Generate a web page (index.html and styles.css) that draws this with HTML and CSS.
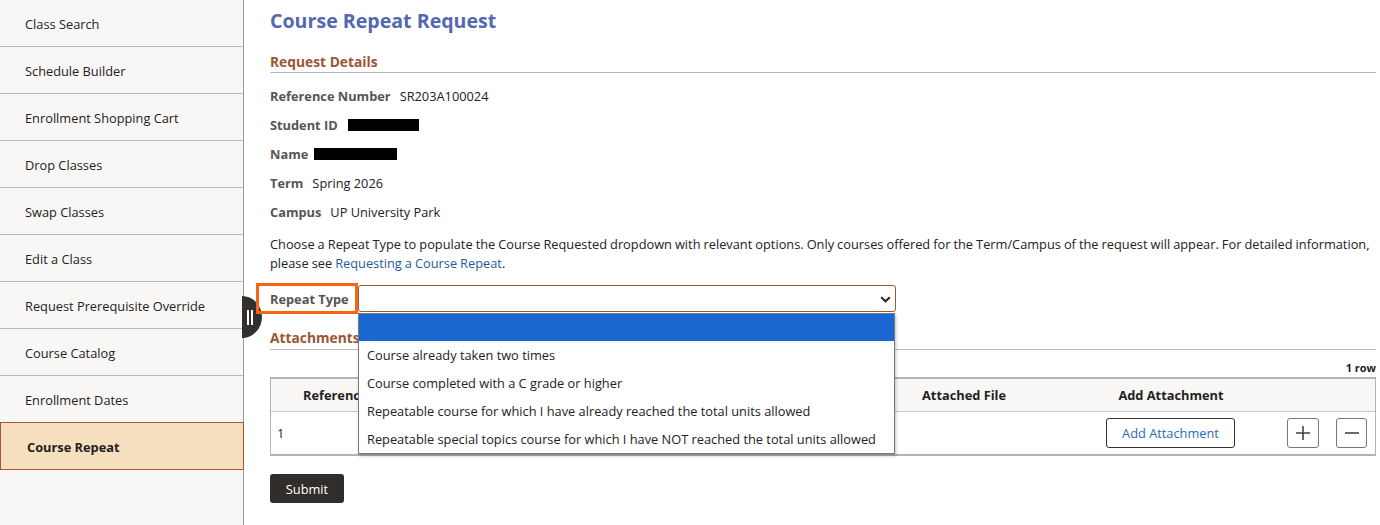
FILE: index.html
```html
<!DOCTYPE html>
<html lang="en">
<head>
<meta charset="utf-8">
<title>Course Repeat Request</title>
<link rel="stylesheet" href="styles.css">
</head>
<body>
<div class="page">
  <nav class="sidebar">
    <div class="nav-item">Class Search</div>
    <div class="nav-item">Schedule Builder</div>
    <div class="nav-item">Enrollment Shopping Cart</div>
    <div class="nav-item">Drop Classes</div>
    <div class="nav-item">Swap Classes</div>
    <div class="nav-item">Edit a Class</div>
    <div class="nav-item">Request Prerequisite Override</div>
    <div class="nav-item">Course Catalog</div>
    <div class="nav-item">Enrollment Dates</div>
    <div class="nav-item active">Course Repeat</div>
    <div class="handle"><span class="bar"></span><span class="bar"></span></div>
  </nav>
  <main class="main">
    <h1 class="title">Course Repeat Request</h1>
    <h2 class="section">Request Details</h2>
    <div class="fields">
      <div class="field"><span class="label">Reference Number</span><span class="value">SR203A100024</span></div>
      <div class="field"><span class="label">Student ID</span><span class="redact redact-id"></span></div>
      <div class="field"><span class="label">Name</span><span class="redact redact-name"></span></div>
      <div class="field"><span class="label">Term</span><span class="value">Spring 2026</span></div>
      <div class="field"><span class="label">Campus</span><span class="value">UP University Park</span></div>
    </div>
    <p class="info">Choose a Repeat Type to populate the Course Requested dropdown with relevant options. Only courses offered for the Term/Campus of the request will appear. For detailed information, please see <a class="link" href="#">Requesting a Course Repeat</a>.</p>
    <div class="repeat-row">
      <span class="repeat-label">Repeat Type</span>
      <div class="select-wrap">
        <div class="select">
          <svg class="chev" width="11" height="7" viewBox="0 0 11 7"><polyline points="1.2,1.2 5.5,5.3 9.8,1.2" fill="none" stroke="#222" stroke-width="2"/></svg>
        </div>
        <ul class="dropdown">
          <li class="opt selected">&nbsp;</li>
          <li class="opt">Course already taken two times</li>
          <li class="opt">Course completed with a C grade or higher</li>
          <li class="opt">Repeatable course for which I have already reached the total units allowed</li>
          <li class="opt">Repeatable special topics course for which I have NOT reached the total units allowed</li>
        </ul>
      </div>
    </div>
    <h2 class="section section-att">Attachments</h2>
    <div class="rowcount">1 row</div>
    <div class="grid">
      <div class="grid-head">
        <div class="c c-num"></div>
        <div class="c c-ref">Reference Number</div>
        <div class="c c-file">Attached File</div>
        <div class="c c-add">Add Attachment</div>
        <div class="c c-plus"></div>
        <div class="c c-minus"></div>
      </div>
      <div class="grid-row">
        <div class="c c-num">1</div>
        <div class="c c-ref"></div>
        <div class="c c-file"></div>
        <div class="c c-add"><button class="btn-att">Add Attachment</button></div>
        <div class="c c-plus"><button class="btn-icon"><svg width="16" height="16" viewBox="0 0 16 16"><path d="M8 1v14M1 8h14" stroke="#444" stroke-width="1.6"/></svg></button></div>
        <div class="c c-minus"><button class="btn-icon"><svg width="16" height="16" viewBox="0 0 16 16"><path d="M1 8h14" stroke="#444" stroke-width="1.6"/></svg></button></div>
      </div>
    </div>
    <button class="submit">Submit</button>
  </main>
</div>
</body>
</html>
```
FILE: styles.css
```css
* { box-sizing: border-box; }
html, body { margin: 0; padding: 0; background: #fff; }
body {
  font-family: "Open Sans", "Noto Sans", sans-serif;
  font-size: 12.8px;
  color: #222;
}
.page {
  display: flex;
  min-height: 525px;
}
.sidebar {
  position: relative;
  width: 244px;
  flex: 0 0 244px;
  background: #f8f7f6;
  border-right: 1px solid #9a9a9a;
  min-height: 525px;
}
.nav-item {
  height: 47px;
  line-height: 48px;
  padding-left: 25px;
  border-bottom: 1px solid #bdb9b6;
  color: #222;
  white-space: nowrap;
}
.nav-item.active {
  height: 48px;
  line-height: 48px;
  margin-top: -1px;
  margin-right: -1px;
  padding-left: 26px;
  background: #f5dfbe;
  border: 1px solid #a5582f;
  font-weight: 700;
}
.handle {
  position: absolute;
  left: 242px;
  top: 296px;
  width: 20px;
  height: 42px;
  background: #333130;
  border-radius: 0 20px 20px 0 / 0 21px 21px 0;
  display: flex;
  gap: 2px;
  padding-left: 5px;
  align-items: center;
  z-index: 5;
}
.handle .bar {
  width: 2px;
  height: 15px;
  background: #fff;
}
.main {
  flex: 1;
  padding: 7px 4px 0 26px;
  min-width: 0;
}
.title {
  margin: 0;
  font-size: 19.6px;
  line-height: 28px;
  font-weight: 700;
  color: #5468b0;
}
.section {
  margin: 17px 0 0;
  font-size: 13.8px;
  line-height: 20px;
  font-weight: 700;
  color: #9b5634;
  border-bottom: 1px solid #b9b9b9;
}
.fields {
  margin-top: 8px;
}
.field {
  height: 29px;
  display: flex;
  align-items: center;
  gap: 9px;
}
.label {
  font-weight: 700;
  color: #555;
}
.value { color: #222; }
.redact {
  display: inline-block;
  height: 12px;
  background: #000;
}
.redact-id { width: 71px; margin-left: 1px; }
.redact-name { width: 83px; margin-left: -3px; }
.info {
  margin: 9px 0 0;
  line-height: 19px;
  color: #222;
  word-spacing: -0.3px;
}
.link {
  color: #1d5c9c;
  text-decoration: none;
}
.repeat-row {
  margin-top: 10px;
  display: flex;
  align-items: center;
  position: relative;
  z-index: 10;
}
.repeat-label {
  margin-left: -14px;
  height: 31px;
  line-height: 26px;
  padding: 0 6px 0 11px;
  border: 3px solid #fa6415;
  font-weight: 700;
  color: #555;
  width: 102px;
  white-space: nowrap;
}
.select-wrap {
  position: relative;
  width: 538px;
}
.select {
  height: 27px;
  border: 1px solid #9a5a36;
  border-radius: 3px;
  background: #fff;
  position: relative;
}
.chev {
  position: absolute;
  right: 4px;
  top: 10px;
}
.dropdown {
  position: absolute;
  left: 0;
  top: 28px;
  width: 537px;
  margin: 0;
  padding: 0;
  list-style: none;
  background: #fff;
  border: 1px solid #7a7a7a;
  box-shadow: 1px 2px 3px rgba(0,0,0,0.25);
}
.opt {
  height: 28px;
  line-height: 28px;
  padding-left: 8px;
  color: #222;
  white-space: nowrap;
}
.opt.selected {
  height: 27px;
  background: #1b67d2;
}
.section-att {
  margin-top: 14px;
  padding-bottom: 1px;
}
.rowcount {
  margin-top: 10px;
  text-align: right;
  font-size: 11px;
  line-height: 16px;
  font-weight: 700;
  color: #222;
}
.grid {
  margin-top: 1px;
  border: 1px solid #b5b2af;
  border-top-width: 2px;
  border-bottom-width: 2px;
}
.grid-head, .grid-row {
  display: grid;
  grid-template-columns: 26px 619px 184px 142px 86px 1fr;
  align-items: center;
}
.grid-head {
  height: 33px;
  background: #f8f7f6;
  border-bottom: 1px solid #c9c6c3;
  font-weight: 700;
  color: #222;
}
.grid-head .c-ref { padding-left: 6px; }
.grid-head .c-file { padding-left: 6px; }
.grid-head .c-add { text-align: center; }
.grid-row {
  height: 42px;
}
.grid-row .c-num { padding-left: 6px; }
.grid-row .c-add { padding-left: 6px; }
.grid-row .c-plus { padding-left: 45px; }
.grid-row .c-minus { padding-left: 8px; }
.btn-att {
  width: 129px;
  height: 30px;
  border: 1px solid #333;
  border-radius: 3px;
  background: #fff;
  color: #2a6ab5;
  font-family: "Open Sans", "Noto Sans", sans-serif;
  font-size: 12.8px;
  padding: 0;
}
.btn-icon {
  width: 32px;
  height: 30px;
  border: 1px solid #777;
  border-radius: 3px;
  background: #fff;
  padding: 0;
  display: flex;
  align-items: center;
  justify-content: center;
}
.c-minus .btn-icon { width: 31px; }
.submit {
  margin-top: 18px;
  width: 74px;
  height: 29px;
  background: #302d2b;
  color: #fff;
  border: none;
  border-radius: 3px;
  font-family: "Open Sans", "Noto Sans", sans-serif;
  font-size: 12.8px;
  padding: 0;
}
```
